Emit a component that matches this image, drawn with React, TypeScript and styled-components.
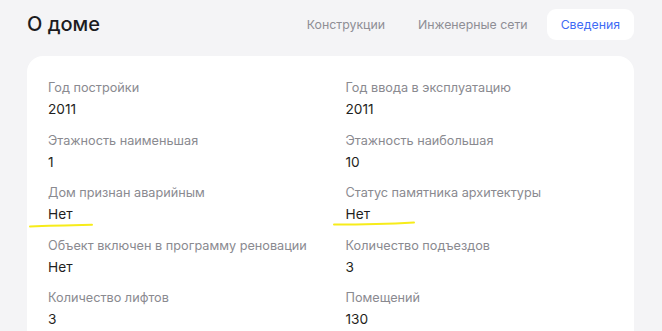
import React from 'react'
import styled, { createGlobalStyle } from 'styled-components'

const GlobalStyle = createGlobalStyle`
  html, body {
    margin: 0;
    padding: 0;
    background: #f4f4f6;
    font-family: Inter, "Noto Sans", Arial, sans-serif;
  }
`

const Page = styled.div`
  height: 331px;
  overflow: hidden;
  box-sizing: border-box;
  padding: 9px 28px 0 27px;
`

const Header = styled.div`
  display: flex;
  justify-content: space-between;
  align-items: center;
  height: 31px;
`

const Title = styled.h1`
  margin: 0;
  font-size: 20px;
  font-weight: 500;
  color: #1c1c1f;
  line-height: 28px;
  margin-top: -1px;
`

const Tabs = styled.div`
  display: flex;
  gap: 5px;
  align-items: center;
`

const Tab = styled.div<{ $active?: boolean }>`
  padding: 0 14px;
  height: 31px;
  display: flex;
  align-items: center;
  border-radius: 9px;
  font-size: 12.3px;
  color: ${({ $active }) => ($active ? '#3f6cf5' : '#8e8e95')};
  background: ${({ $active }) => ($active ? '#ffffff' : 'transparent')};
`

const Card = styled.div`
  margin-top: 16px;
  background: #fff;
  border-radius: 16px;
  padding: 24px 21px 20px;
  display: grid;
  grid-template-columns: 1fr 1fr;
  column-gap: 30px;
  row-gap: 13.5px;
`

const Item = styled.div`
  position: relative;
  display: flex;
  flex-direction: column;
  gap: 3px;
`

const Label = styled.div`
  font-size: 12.7px;
  line-height: 16px;
  color: #8a8a90;
`

const Value = styled.div`
  font-size: 13.7px;
  line-height: 20px;
  color: #1f1f22;
`

const Mark = styled.svg`
  position: absolute;
  pointer-events: none;
`

const items: [string, string, number?][] = [
  ['Год постройки', '2011'],
  ['Год ввода в эксплуатацию', '2011'],
  ['Этажность наименьшая', '1'],
  ['Этажность наибольшая', '10'],
  ['Дом признан аварийным', 'Нет', 1],
  ['Статус памятника архитектуры', 'Нет', 2],
  ['Объект включен в программу реновации', 'Нет'],
  ['Количество подъездов', '3'],
  ['Количество лифтов', '3'],
  ['Помещений', '130'],
]

const App = () => (
  <>
    <GlobalStyle />
    <Page>
      <Header>
        <Title>О доме</Title>
        <Tabs>
          <Tab>Конструкции</Tab>
          <Tab>Инженерные сети</Tab>
          <Tab $active>Сведения</Tab>
        </Tabs>
      </Header>
      <Card>
        {items.map(([label, value, mark]) => (
          <Item key={label}>
            <Label>{label}</Label>
            <Value>{value}</Value>
            {mark === 1 && (
              <Mark width="70" height="8" viewBox="0 0 70 8" style={{ left: -20, top: 36 }}>
                <path d="M2 5.5 C 20 4.8, 45 4.2, 64 3.8" stroke="#f7ec1a" strokeWidth="2" fill="none" strokeLinecap="round" />
              </Mark>
            )}
            {mark === 2 && (
              <Mark width="90" height="8" viewBox="0 0 90 8" style={{ left: -14, top: 34 }}>
                <path d="M2 5.5 C 25 5.5, 55 5, 82 3.5" stroke="#f7ec1a" strokeWidth="2" fill="none" strokeLinecap="round" />
              </Mark>
            )}
          </Item>
        ))}
      </Card>
    </Page>
  </>
)

export default App
